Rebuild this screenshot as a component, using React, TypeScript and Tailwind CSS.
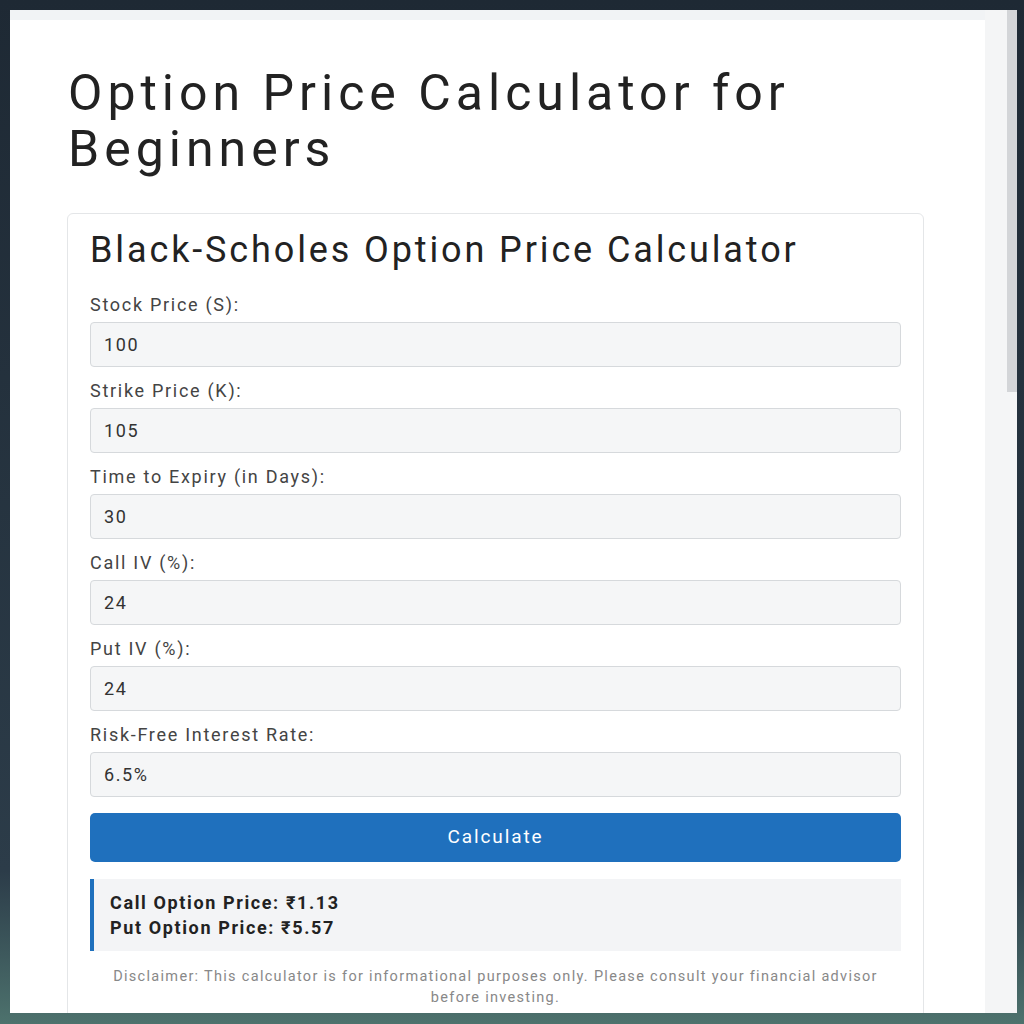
import React from 'react'

const fields = [
  { label: 'Stock Price (S):', value: '100' },
  { label: 'Strike Price (K):', value: '105' },
  { label: 'Time to Expiry (in Days):', value: '30' },
  { label: 'Call IV (%):', value: '24' },
  { label: 'Put IV (%):', value: '24' },
  { label: 'Risk-Free Interest Rate:', value: '6.5%' },
]

export default function App() {
  return (
    <div
      className="h-screen w-full overflow-hidden bg-gradient-to-b from-[#1e2934] via-[#2c3c49] via-85% to-[#4d726d] pt-[10px] pl-[10px]"
      style={{ fontFamily: 'Roboto, "Liberation Sans", sans-serif' }}
    >
      <div className="flex h-[1003px] w-[1007px] overflow-hidden">
        {/* Page */}
        <div className="flex w-[975px] shrink-0 flex-col bg-white">
          <div className="h-[10px] shrink-0 bg-[#f1f3f5]" />
          <div className="shrink-0 pl-[57px] pt-[45px]">
            <h1 className="pl-px text-[50px] font-normal leading-[56px] tracking-[0.1em] text-[#222]">
              Option Price Calculator for
              <br />
              Beginners
            </h1>

            <div className="mt-[36px] w-[857px] rounded-[6px] border border-[#e4e6e8] px-[22px] pb-[30px] pt-[14px]">
              <h2 className="mb-[21px] text-[36px] leading-[44px] tracking-[0.08em] text-[#222]">
                Black-Scholes Option Price Calculator
              </h2>

              {fields.map((f) => (
                <div key={f.label} className="mb-[12px]">
                  <label className="mb-[5px] block text-[18px] leading-[24px] tracking-[0.095em] text-[#444]">
                    {f.label}
                  </label>
                  <div className="flex h-[45px] items-center rounded-[4px] border border-[#d6d9dc] bg-[#f5f6f7] px-[13px] text-[18px] tracking-[0.09em] text-[#333]">
                    {f.value}
                  </div>
                </div>
              ))}

              <button className="mt-[4px] h-[49px] w-full rounded-[5px] bg-[#1f70bd] text-[19px] tracking-[0.1em] text-white">
                Calculate
              </button>

              <div className="mt-[17px] border-l-4 border-[#1f70bd] bg-[#f3f4f6] py-[11px] pl-[16px] text-[18px] font-bold leading-[25px] tracking-[0.09em] text-[#222]">
                <div>Call Option Price: ₹1.13</div>
                <div>Put Option Price: ₹5.57</div>
              </div>

              <p className="mt-[15px] text-center text-[14.5px] leading-[21px] tracking-[0.09em] text-[#888]">
                Disclaimer: This calculator is for informational purposes only. Please consult your financial advisor
                <br />
                before investing.
              </p>
            </div>
          </div>
        </div>

        {/* Scrollbar */}
        <div className="flex w-[32px] shrink-0 bg-[#f4f5f6]">
          <div className="w-[22px]" />
          <div className="h-[382px] w-[10px] bg-[#d3d5d8]" />
        </div>
      </div>
    </div>
  )
}
